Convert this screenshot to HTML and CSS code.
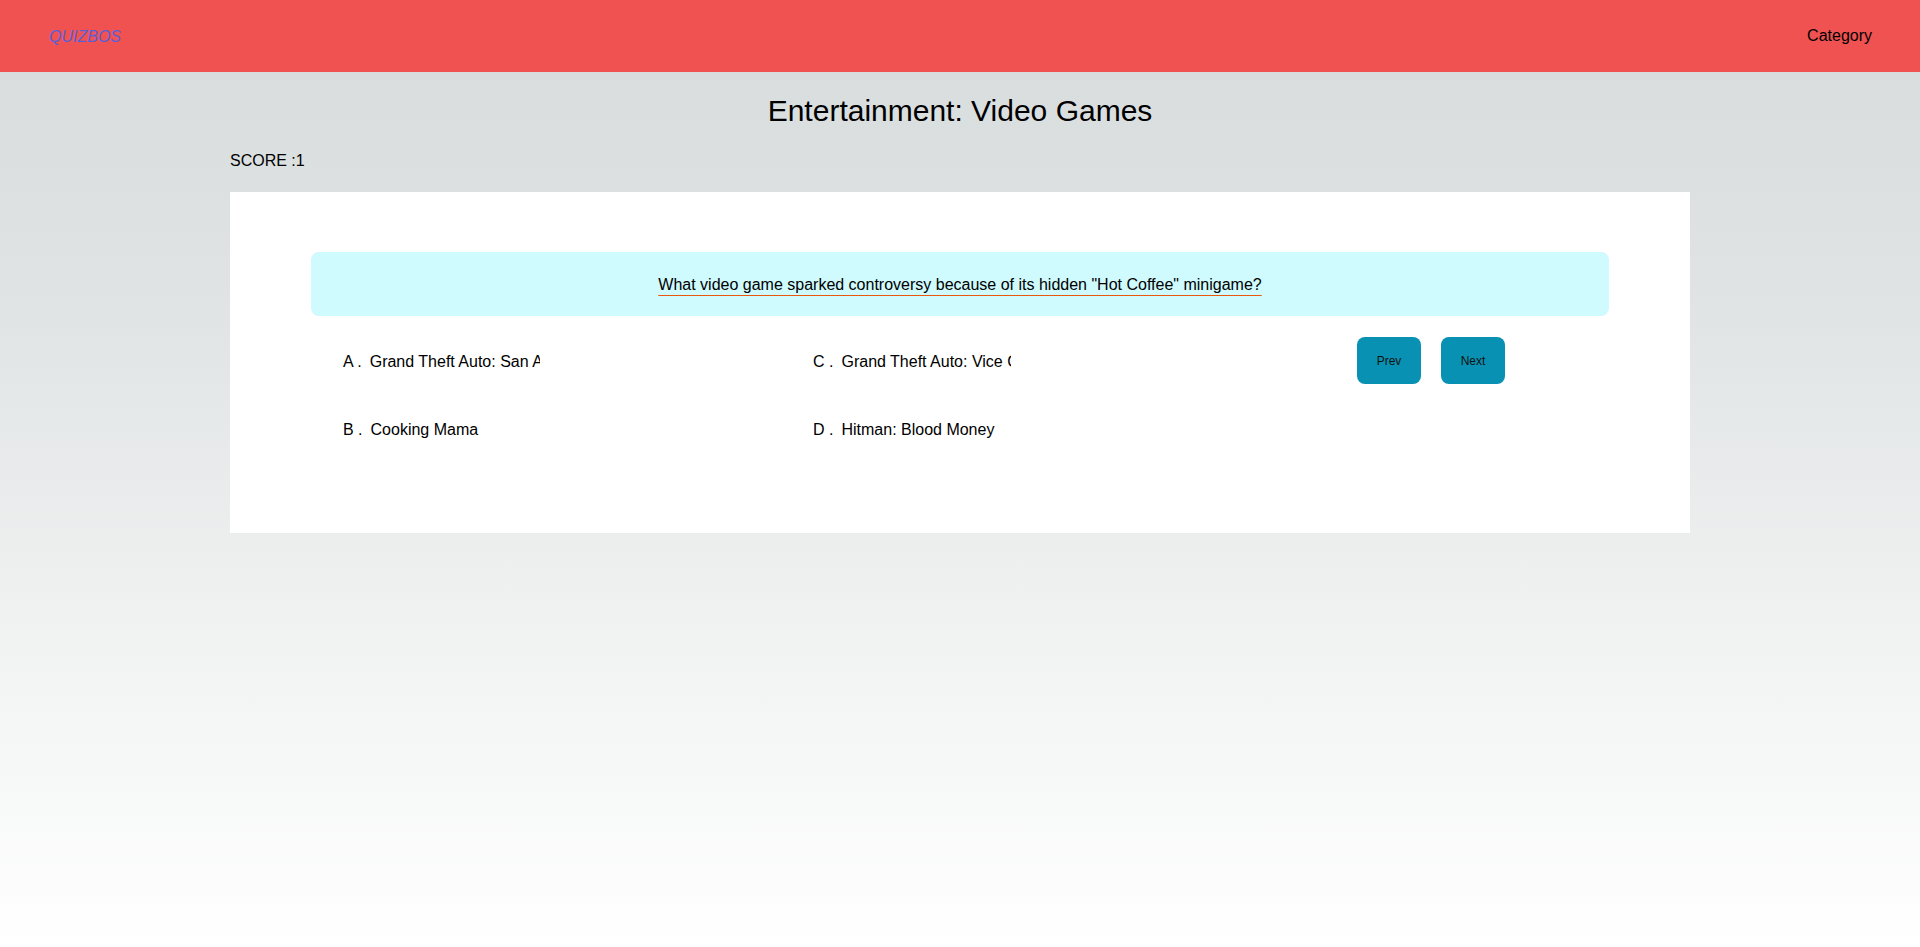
FILE: index.html
```html
<!DOCTYPE html>
<html lang="en">
<head>
<meta charset="utf-8">
<title>Quizbos</title>
<link rel="stylesheet" href="styles.css">
</head>
<body>
<header class="topbar">
  <a class="brand">QUIZBOS</a>
  <a class="nav-link">Category</a>
</header>
<main class="quiz">
  <h1 class="quiz-title">Entertainment: Video Games</h1>
  <div class="score">SCORE :1</div>
  <section class="card">
    <div class="question"><span class="question-text">What video game sparked controversy because of its hidden "Hot Coffee" minigame?</span></div>
    <div class="play-row">
      <div class="options">
        <div class="option"><span class="letter">A .</span><span class="answer">Grand Theft Auto: San Andreas</span></div>
        <div class="option"><span class="letter">B .</span><span class="answer">Cooking Mama</span></div>
        <div class="option"><span class="letter">C .</span><span class="answer">Grand Theft Auto: Vice City</span></div>
        <div class="option"><span class="letter">D .</span><span class="answer">Hitman: Blood Money</span></div>
      </div>
      <div class="controls">
        <button class="btn">Prev</button>
        <button class="btn">Next</button>
      </div>
    </div>
  </section>
</main>
</body>
</html>
```
FILE: styles.css
```css
html, body {
  margin: 0;
  padding: 0;
}
body {
  min-height: 947px;
  font-family: "Liberation Sans", Arial, sans-serif;
  font-size: 16px;
  color: #000;
  background: linear-gradient(to bottom, #d6dbdc 0%, #dfe3e4 30%, #f0f1f1 65%, #ffffff 100%);
}
.topbar {
  height: 72px;
  background: #f05252;
  display: flex;
  align-items: center;
  justify-content: space-between;
  padding: 0 48px 0 49px;
}
.brand {
  font-style: italic;
  color: #5b5fd6;
  font-size: 16px;
  padding-top: 2px;
}
.nav-link {
  color: #000;
  font-size: 16px;
}
.quiz {
  width: 1460px;
  margin: 0 auto;
}
.quiz-title {
  margin: 22px 0 0;
  font-size: 30px;
  line-height: 34px;
  font-weight: normal;
  text-align: center;
}
.score {
  margin-top: 24px;
  line-height: 18px;
}
.card {
  margin-top: 22px;
  background: #fff;
  padding: 60px 81px 81px;
}
.question {
  height: 64px;
  box-sizing: border-box;
  padding-top: 2px;
  background: #cffafe;
  border-radius: 8px;
  display: flex;
  align-items: center;
  justify-content: center;
}
.question-text {
  text-decoration-line: underline;
  text-decoration-color: #ea580c;
  text-decoration-thickness: 1px;
  text-underline-offset: 5px;
}
.play-row {
  display: flex;
  margin-top: 21px;
}
.options {
  margin-left: 32px;
  display: grid;
  grid-template-columns: 470px 470px;
  grid-template-rows: 47px 47px;
  grid-auto-flow: column;
  row-gap: 21px;
}
.option {
  display: flex;
  align-items: center;
  padding-top: 2px;
}
.letter {
  white-space: pre;
}
.answer {
  margin-left: 8px;
  width: 170px;
  overflow: hidden;
  white-space: nowrap;
}
.controls {
  margin-left: 74px;
  display: flex;
  gap: 20px;
  align-items: flex-start;
}
.btn {
  width: 64px;
  height: 47px;
  border: none;
  border-radius: 8px;
  background: #0891b2;
  color: #111;
  font-family: "Liberation Sans", Arial, sans-serif;
  font-size: 12px;
  padding: 0;
}
```
